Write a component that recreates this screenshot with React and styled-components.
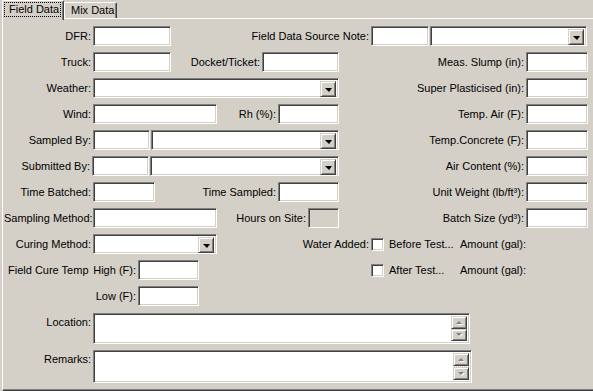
import React from "react";
import styled, { createGlobalStyle, css } from "styled-components";

const Global = createGlobalStyle`
  html, body { margin: 0; padding: 0; background: #d4d0c8; }
  body { font-family: "Liberation Sans", Arial, sans-serif; font-size: 11px; color: #000; }
`;

const sunken = css`
  box-sizing: border-box;
  border: 1px solid;
  border-color: #808080 #ffffff #ffffff #808080;
  box-shadow: inset 1px 1px #404040, inset -1px -1px #d4d0c8;
`;

const raised = css`
  box-sizing: border-box;
  border: 1px solid;
  border-color: #d4d0c8 #404040 #404040 #d4d0c8;
  box-shadow: inset 1px 1px #ffffff, inset -1px -1px #808080;
  background: #d4d0c8;
`;

const Window = styled.div`
  width: 593px;
  height: 391px;
  overflow: hidden;
  background: #d4d0c8;
`;

const TabStrip = styled.div`
  display: flex;
  align-items: flex-end;
  height: 18px;
  padding-left: 2px;
`;

const Tab = styled.div`
  position: relative;
  box-sizing: border-box;
  width: ${(p) => p.w}px;
  height: ${(p) => (p.active ? 20 : 16)}px;
  margin-bottom: ${(p) => (p.active ? -2 : 0)}px;
  z-index: ${(p) => (p.active ? 2 : 1)};
  background: #d4d0c8;
  border-top: 1px solid #fff;
  border-left: 1px solid #fff;
  border-right: 1px solid #404040;
  box-shadow: inset -1px 0 #808080;
  border-radius: 2px 2px 0 0;
  white-space: nowrap;
  padding: ${(p) => (p.active ? "1px 2px 0 1px" : "1px 0 0 6px")};
`;

const TabFocus = styled.div`
  box-sizing: border-box;
  border: 1px dotted #000;
  height: 15px;
  line-height: 13px;
  padding-left: 4px;
  white-space: nowrap;
  overflow: hidden;
`;

const Panel = styled.div`
  box-sizing: border-box;
  width: 610px;
  height: 373px;
  margin-left: 2px;
  border: 1px solid;
  border-color: #ffffff #404040 #404040 #ffffff;
  box-shadow: inset -1px -1px #808080;
  padding: 7px 0 0 1px;
  position: relative;
`;

const Row = styled.div`
  display: flex;
  align-items: center;
  height: ${(p) => p.h || 20}px;
  margin-top: ${(p) => p.mt ?? 6}px;
  &:first-child { margin-top: 0; }
  ${(p) => p.top && css`align-items: flex-start;`}
`;

const Label = styled.div`
  box-sizing: border-box;
  width: ${(p) => p.w}px;
  flex: none;
  text-align: ${(p) => (p.left ? "left" : "right")};
  padding: ${(p) => (p.left ? "0 0 0 4px" : "0 2px 0 0")};
  line-height: ${(p) => (p.top ? 18 : 20)}px;
  white-space: nowrap;
  overflow: visible;
`;

const Input = styled.div`
  ${sunken}
  flex: none;
  width: ${(p) => p.w}px;
  height: 20px;
  margin-left: ${(p) => p.ml || 0}px;
  background: ${(p) => (p.disabled ? "#d4d0c8" : "#ffffff")};
`;

const ComboBox = styled.div`
  ${sunken}
  flex: none;
  display: flex;
  justify-content: flex-end;
  padding: 2px;
  width: ${(p) => p.w}px;
  height: 20px;
  margin-left: ${(p) => p.ml || 0}px;
  background: #fff;
`;

const DropButton = styled.div`
  ${raised}
  width: 16px;
  height: 16px;
  display: flex;
  align-items: center;
  justify-content: center;
  &::after {
    content: "";
    width: 0;
    height: 0;
    border-left: 4px solid transparent;
    border-right: 3px solid transparent;
    border-top: 4px solid #000;
    margin-top: 1px;
  }
`;

const Check = styled.div`
  ${sunken}
  flex: none;
  width: 13px;
  height: 13px;
  background: #fff;
`;

const CheckText = styled.div`
  box-sizing: border-box;
  width: ${(p) => p.w}px;
  padding-left: 5px;
  flex: none;
  white-space: nowrap;
`;

const Memo = styled.div`
  ${sunken}
  flex: none;
  display: flex;
  justify-content: flex-end;
  padding: 2px;
  width: ${(p) => p.w}px;
  height: ${(p) => p.h}px;
  background: #fff;
`;

const ScrollCol = styled.div`
  display: flex;
  flex-direction: column;
  justify-content: space-between;
  width: 16px;
  background-image: repeating-linear-gradient(90deg, #fff 0 1px, #d4d0c8 1px 2px);
`;

const ScrollButton = styled.div`
  ${raised}
  height: 13px;
  display: flex;
  align-items: center;
  justify-content: center;
  &::after {
    content: "";
    width: 0;
    height: 0;
    border-left: 3px solid transparent;
    border-right: 3px solid transparent;
    ${(p) => (p.up ? "border-bottom: 3px solid #808080;" : "border-top: 3px solid #808080;")}
    filter: drop-shadow(1px 1px 0 #fff);
  }
`;

const Combo = ({ w, ml }) => (
  <ComboBox w={w} ml={ml}>
    <DropButton />
  </ComboBox>
);

const MemoField = ({ w, h }) => (
  <Memo w={w} h={h}>
    <ScrollCol>
      <ScrollButton up />
      <ScrollButton />
    </ScrollCol>
  </Memo>
);

export default function App() {
  return (
    <Window>
      <Global />
      <TabStrip>
        <Tab w={62} active>
          <TabFocus>Field Data</TabFocus>
        </Tab>
        <Tab w={53}>Mix Data</Tab>
      </TabStrip>
      <Panel>
        <Row>
          <Label w={89}>DFR:</Label>
          <Input w={78} />
          <Label w={200}>Field Data Source Note:</Label>
          <Input w={58} />
          <Combo w={157} ml={1} />
        </Row>
        <Row>
          <Label w={89}>Truck:</Label>
          <Input w={78} />
          <Label w={91}>Docket/Ticket:</Label>
          <Input w={77} />
          <Label w={187}>Meas. Slump (in):</Label>
          <Input w={62} />
        </Row>
        <Row>
          <Label w={89}>Weather:</Label>
          <Combo w={246} />
          <Label w={187}>Super Plasticised (in):</Label>
          <Input w={62} />
        </Row>
        <Row>
          <Label w={89}>Wind:</Label>
          <Input w={124} />
          <Label w={61}>Rh (%):</Label>
          <Input w={61} />
          <Label w={187}>Temp. Air (F):</Label>
          <Input w={62} />
        </Row>
        <Row>
          <Label w={89}>Sampled By:</Label>
          <Input w={57} />
          <Combo w={188} ml={1} />
          <Label w={187}>Temp.Concrete (F):</Label>
          <Input w={62} />
        </Row>
        <Row>
          <Label w={88}>Submitted By:</Label>
          <Input w={57} />
          <Combo w={189} ml={1} />
          <Label w={187}>Air Content (%):</Label>
          <Input w={62} />
        </Row>
        <Row>
          <Label w={89}>Time Batched:</Label>
          <Input w={62} />
          <Label w={123}>Time Sampled:</Label>
          <Input w={61} />
          <Label w={187}>Unit Weight (lb/ft³):</Label>
          <Input w={62} />
        </Row>
        <Row>
          <Label w={89}>Sampling Method:</Label>
          <Input w={124} />
          <Label w={91}>Hours on Site:</Label>
          <Input w={31} disabled />
          <Label w={187}>Batch Size (yd³):</Label>
          <Input w={62} />
        </Row>
        <Row>
          <Label w={89}>Curing Method:</Label>
          <Combo w={124} />
          <Label w={154}>Water Added:</Label>
          <Check />
          <CheckText w={76}>Before Test...</CheckText>
          <Label w={66}>Amount (gal):</Label>
        </Row>
        <Row>
          <Label w={88} left>Field Cure Temp</Label>
          <Label w={46}>High (F):</Label>
          <Input w={61} />
          <Label w={172}></Label>
          <Check />
          <CheckText w={76}>After Test...</CheckText>
          <Label w={66}>Amount (gal):</Label>
        </Row>
        <Row>
          <Label w={134}>Low (F):</Label>
          <Input w={61} />
        </Row>
        <Row top h={31} mt={7}>
          <Label w={89} top>Location:</Label>
          <MemoField w={377} h={31} />
        </Row>
        <Row top h={33} mt={6}>
          <Label w={89} top>Remarks:</Label>
          <MemoField w={379} h={33} />
        </Row>
      </Panel>
    </Window>
  );
}
